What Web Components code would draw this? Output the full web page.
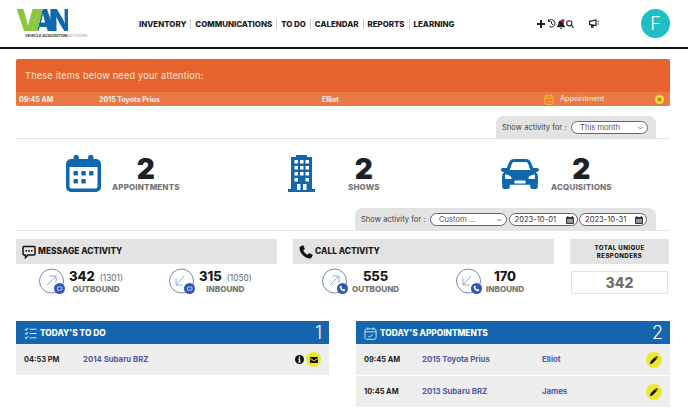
<!DOCTYPE html>
<html lang="en">
<head>
<meta charset="utf-8">
<title>Vehicle Acquisition Network</title>
<style>
  html, body { margin: 0; background: #fff; overflow: hidden; }
  body { font-family: Inter, "Liberation Sans", sans-serif; color: #222; }
  #page { width: 654px; padding: 0 18px 0 16px; }
  van-filter.first { margin-top: 10px; }
  van-filter.second { margin-top: 16px; }
  .stats { display: grid; grid-template-columns: 223px 213px auto; padding: 16px 0 0 49px; }
  .activity { display: grid; grid-template-columns: 261px 261px 99px; column-gap: 16px; margin-top: 8px; }
  .panels { display: grid; grid-template-columns: 313px 314px; column-gap: 27px; margin-top: 26px; }
</style>
</head>
<body>
<van-nav></van-nav>
<div id="page">
  <van-alert></van-alert>

  <van-filter class="first" style="--tab-width:160px">
    <van-pill style="--w:77px">This month</van-pill>
  </van-filter>

  <div class="stats">
    <van-stat value="2" label="APPOINTMENTS" style="--gap:10px"><van-icon name="calendar" style="--w:37px;--h:37px;color:#0f68ae"></van-icon></van-stat>
    <van-stat value="2" label="SHOWS" style="--gap:33px"><van-icon name="building" style="--w:27px;--h:37px;color:#0f68ae"></van-icon></van-stat>
    <van-stat value="2" label="ACQUISITIONS" style="--gap:12px"><van-icon name="car" style="--w:38px;--h:30px;color:#0f68ae"></van-icon></van-stat>
  </div>

  <van-filter class="second" style="--tab-width:301px">
    <van-pill style="--w:77px">Custom ...</van-pill>
    <van-pill date style="--w:69px">2023-10-01</van-pill>
    <van-pill date style="--w:68px">2023-10-31</van-pill>
  </van-filter>

  <div class="activity">
    <van-activity heading="MESSAGE ACTIVITY" icon="message" style="--pad:23px;--col:130px">
      <van-metric kind="out" badge="message" value="342" extra="(1301)" label="OUTBOUND"></van-metric>
      <van-metric kind="in" badge="message" value="315" extra="(1050)" label="INBOUND"></van-metric>
    </van-activity>
    <van-activity heading="CALL ACTIVITY" icon="phone" style="--pad:29px;--col:134px">
      <van-metric kind="out" badge="phone" value="555" label="OUTBOUND"></van-metric>
      <van-metric kind="in" badge="phone" value="170" label="INBOUND"></van-metric>
    </van-activity>
    <van-total value="342"></van-total>
  </div>

  <div class="panels">
    <van-panel heading="TODAY'S TO DO" icon="list" count="1">
      <van-row time="04:53 PM" car="2014 Subaru BRZ" style="--car:59px">
        <van-icon name="info" style="--w:9px;--h:9px;color:#111"></van-icon>
        <van-round name="mail" style="--size:15px"></van-round>
      </van-row>
    </van-panel>
    <van-panel heading="TODAY'S APPOINTMENTS" icon="calcheck" count="2">
      <van-row time="09:45 AM" car="2015 Toyota Prius" person="Elliot" style="--car:58px"><van-round name="pencil"></van-round></van-row>
      <van-row time="10:45 AM" car="2013 Subaru BRZ" person="James" style="--car:58px"><van-round name="pencil"></van-round></van-row>
    </van-panel>
  </div>
</div>

<script>
const ICONS = {
  calendar: ['0 0 37 37', '<path fill="currentColor" fill-rule="evenodd" d="M6 4h2.5V2.5a2.7 2.7 0 0 1 5.4 0V4h9.2V2.5a2.7 2.7 0 0 1 5.4 0V4H31a5 5 0 0 1 5 5v23a5 5 0 0 1-5 5H6a5 5 0 0 1-5-5V9a5 5 0 0 1 5-5zM4.500 12v19.500A2 2 0 0 0 6.500 33.500h24a2 2 0 0 0 2-2V12z"/><g fill="currentColor"><rect x="8.500" y="16" width="4.500" height="4.500" rx="1"/><rect x="16.300" y="16" width="4.500" height="4.500" rx="1"/><rect x="24" y="16" width="4.500" height="4.500" rx="1"/><rect x="8.500" y="24" width="4.500" height="4.500" rx="1"/><rect x="16.300" y="24" width="4.500" height="4.500" rx="1"/></g>'],
  building: ['0 0 27 37', '<path fill="currentColor" d="M3 2h5V0h11v2h5v32h3v3H0v-3h3z"/><g fill="#fff"><rect x="6.500" y="5" width="3.500" height="3.500"/><rect x="12" y="5" width="3.500" height="3.500"/><rect x="17.500" y="5" width="3.500" height="3.500"/><rect x="6.500" y="11" width="3.500" height="3.500"/><rect x="12" y="11" width="3.500" height="3.500"/><rect x="17.500" y="11" width="3.500" height="3.500"/><rect x="6.500" y="17" width="3.500" height="3.500"/><rect x="12" y="17" width="3.500" height="3.500"/><rect x="17.500" y="17" width="3.500" height="3.500"/><rect x="6.500" y="23" width="3.500" height="3.500"/><rect x="17.500" y="23" width="3.500" height="3.500"/><rect x="9" y="29" width="3.500" height="6"/><rect x="15" y="29" width="3.500" height="6"/></g>'],
  car: ['0 0 38 30', '<path fill="currentColor" fill-rule="evenodd" d="M8 3.500C9 1.200 10.500 0 13 0h12c2.500 0 4 1.200 5 3.500L32.300 9h3.700c1.200 0 2 .8 2 1.800S37 13 35.500 13h-.8c1.400 1.300 2.300 3 2.300 5v7h-.2v3a2 2 0 0 1-2 2h-3.600a2 2 0 0 1-2-2v-2.200H8.800V28a2 2 0 0 1-2 2H3.200a2 2 0 0 1-2-2v-3H1v-7c0-2 .9-3.700 2.300-5h-.8C1 13 0 12 0 10.800S.8 9 2 9h3.700zM11 4.500 8.600 11h20.800L27 4.500C26.600 3.500 26 3 25 3H13c-1 0-1.600.5-2 1.500zM4 16.500v2.200c0 .7.600 1.300 1.300 1.300h4.400c.8 0 1.300-.8.900-1.400-.7-1.200-3-2.800-5-3-1.300-.1-1.600.2-1.600.900zm30 0c0-.7-.3-1-1.600-.9-2 .2-4.300 1.800-5 3-.4.600.1 1.400.9 1.400h4.400c.7 0 1.300-.6 1.300-1.300zM13.500 21.500v3h11v-3z"/>'],
  message: ['0 0 14 14', '<path fill="none" stroke="currentColor" stroke-width="1.500" d="M2 1.500h10a1 1 0 0 1 1 1v6.500a1 1 0 0 1-1 1H6l-2.500 2.500V10H2a1 1 0 0 1-1-1V2.500a1 1 0 0 1 1-1z"/><g fill="currentColor"><rect x="3.500" y="5" width="1.600" height="1.600"/><rect x="6.200" y="5" width="1.600" height="1.600"/><rect x="8.900" y="5" width="1.600" height="1.600"/></g>'],
  phone: ['0 0 14 14', '<path fill="currentColor" d="M1 1.800 3.400.4c.4-.2.800-.1 1 .3l1.300 2.700c.2.300.1.700-.2.900L4.200 5.400c.8 1.800 2.500 3.500 4.400 4.400l1.100-1.300c.2-.3.600-.4.900-.2l2.700 1.300c.4.200.5.600.3 1l-1.400 2.400c-.2.300-.5.500-.9.500C5.700 13.500.5 8.300.5 2.700c0-.4.200-.7.500-.9z"/>'],
  list: ['0 0 14 14', '<g fill="none" stroke="currentColor" stroke-width="1.100"><path d="M1 2.200 2.300 3.400 4.300 1"/><path d="M1 6.700 2.300 7.900 4.300 5.500"/><path d="M1 11.200 2.300 12.400 4.300 10"/><path d="M6 2.500h7.500M6 7h7.500M6 11.500h7.500"/></g>'],
  calcheck: ['0 0 14 14', '<g fill="none" stroke="currentColor" stroke-width="1"><rect x="1" y="2" width="12" height="11.300" rx="2"/><path d="M1 5.200h12M4 .5v2.500M10 .5v2.500"/><path d="M4.500 9.500 6 11l3.500-3"/></g>'],
  calclip: ['0 0 12 13', '<g fill="none" stroke="currentColor" stroke-width="1.100"><rect x="1" y="2" width="10" height="10.300" rx="1.500"/><path d="M1 5h10M3.500.5V3M8.500.5V3"/><path d="M3.800 9h4.400l-1.200-1.300M8.200 9l-1.200 1.300"/></g>'],
  info: ['0 0 10 10', '<circle cx="5" cy="5" r="5" fill="currentColor"/><rect x="4.200" y="1.600" width="1.600" height="1.500" fill="#fff"/><path fill="#fff" d="M3.600 4h2.200v3.300h.7v1H3.500v-1h.8V5h-.7z"/>'],
  mail: ['0 0 8 6', '<path fill="currentColor" d="M.8 0h6.400c.4 0 .8.400.8.800v.2L4 3.200 0 1V.8C0 .4.400 0 .8 0zM0 2l4 2.200L8 2v3.200c0 .4-.4.800-.8.800H.8C.4 6 0 5.600 0 5.200z"/>'],
  pencil: ['0 0 9 9', '<path fill="currentColor" d="M0 9 .5 6.300 5.600 1.200 7.800 3.400 2.700 8.500zM6.200.6 6.700.1c.2-.1.400-.1.600 0L8.900 1.700c.1.200.1.400 0 .6l-.5.500z"/>'],
  plus: ['0 0 8 8', '<path fill="none" stroke="currentColor" stroke-width="2" d="M4 0v8M0 4h8"/>'],
  history: ['0 0 8 9', '<path fill="none" stroke="currentColor" stroke-width="1" d="M1.500 1.200A3.800 3.800 0 1 1 1.800 7.600M1 .5v2h2M4 2.500v2.300l1.500 1"/>'],
  bell: ['0 0 8 10', '<path fill="currentColor" d="M4 1.500c1.800 0 2.700 1.300 2.700 3 0 1.600.5 2.300 1.300 3v.8H0v-.8c.8-.7 1.300-1.400 1.300-3 0-1.700.9-3 2.700-3zM3 9h2a1 1 0 0 1-2 0z"/><circle cx="5.800" cy="1.700" r="1.700" fill="#e0142d"/>'],
  search: ['0 0 8 8', '<circle cx="3.300" cy="3.300" r="2.600" fill="none" stroke="currentColor" stroke-width="1.100"/><path stroke="currentColor" stroke-width="1.200" d="M5.200 5.200 7.700 7.700"/>'],
  megaphone: ['0 0 10 9', '<path fill="none" stroke="currentColor" stroke-width="1.200" d="M.6 2.300 7 .9v5.600L.6 5.400zM2.500 5.800v2.400h1.500V6.200"/><path stroke="currentColor" stroke-width="1" d="M8.500 2.600 10 2M8.500 4.800 10 5.200"/>'],
  close: ['0 0 10 10', '<circle cx="5" cy="5" r="5" fill="#f6e02c"/><path stroke="#a8651c" stroke-width="1.300" d="M3 3l4 4M7 3 3 7"/>'],
  date: ['0 0 9 9', '<rect y="1" width="9" height="8" rx="1" fill="#333"/><rect x="1.500" y="0" width="1.200" height="2" fill="#333"/><rect x="6.300" y="0" width="1.200" height="2" fill="#333"/><rect x="1.200" y="3.200" width="6.600" height="4.600" fill="#999"/>']
};

class VanIcon extends HTMLElement {
  constructor() {
    super();
    const [box, body] = ICONS[this.getAttribute('name')];
    this.attachShadow({ mode: 'open' }).innerHTML = `
      <style>
        :host { display: block; flex: none; width: var(--w, 10px); height: var(--h, 10px); }
        svg { display: block; width: 100%; height: 100%; }
      </style>
      <svg viewBox="${box}" aria-hidden="true">${body}</svg>`;
  }
}

const navTemplate = document.createElement('template');
navTemplate.innerHTML = `
<style>
  :host { display: flex; align-items: center; box-sizing: border-box; height: 49px; border-bottom: 2px solid #111; padding-left: 16px; }
  .logo { width: 123px; flex: none; align-self: flex-start; padding-top: 7px; }
  .van { display: block; width: 52px; height: 26px; font: 900 30px/27px Inter, sans-serif; letter-spacing: -6px; white-space: nowrap;
    background: linear-gradient(104deg, #8cc63f 0 47%, #0f68ae 47%); -webkit-background-clip: text; background-clip: text; color: transparent; }
  .sub { display: block; font: 700 3.800px/4px Inter, sans-serif; color: #333; white-space: nowrap; margin: 1px 0 0 9px; }
  .sub span { color: #999; font-weight: 400; }
  ul { display: flex; margin: 0; padding: 0; list-style: none; font: 800 7.900px/10px Inter, sans-serif; color: #1b1b1b; width: 398px; flex: none; }
  li + li { margin-left: 4px; padding-left: 4px; border-left: 1px solid #ccc; }
  .tools { display: flex; align-items: center; color: #222; }
  .avatar { width: 29px; height: 29px; border-radius: 50%; background: #20bfc4; color: #fff; margin-left: 42px;
    display: flex; align-items: center; justify-content: center; font: 300 18px/1 Inter, sans-serif; }
</style>
<div class="logo">
  <span class="van">VAN</span>
  <span class="sub">VEHICLE ACQUISITION <span>NETWORK</span></span>
</div>
<ul>
  <li>INVENTORY</li><li>COMMUNICATIONS</li><li>TO DO</li><li>CALENDAR</li><li>REPORTS</li><li>LEARNING</li>
</ul>
<div class="tools">
  <van-icon name="plus" style="--w:8px;--h:8px"></van-icon>
  <van-icon name="history" style="--w:9px;--h:9px;margin-left:2px"></van-icon>
  <van-icon name="bell" style="--w:8px;--h:10px;margin-left:1px"></van-icon>
  <van-icon name="search" style="--w:8px;--h:8px;margin-left:1px"></van-icon>
  <van-icon name="megaphone" style="--w:10px;--h:9px;margin-left:15px"></van-icon>
</div>
<div class="avatar">F</div>`;

class VanNav extends HTMLElement {
  constructor() {
    super();
    this.attachShadow({ mode: 'open' }).appendChild(navTemplate.content.cloneNode(true));
  }
}

const alertTemplate = document.createElement('template');
alertTemplate.innerHTML = `
<style>
  :host { display: block; margin-top: 10px; background: #e7632e; color: #fff; border-radius: 2px; overflow: hidden; }
  .head { height: 33px; display: flex; align-items: center; padding-left: 9px; font: 400 9.200px/1 Inter, sans-serif; letter-spacing: .2px; color: #fde6da; }
  .row { height: 14px; background: #ea7a45; display: grid; grid-template-columns: 80px 223px 222px 1fr 10px; align-items: center; padding: 0 5px 0 3px; font: 700 7px/1 Inter, sans-serif; color: #fdeee6; }
  .appt { display: flex; align-items: center; gap: 6px; font-weight: 400; font-size: 7.300px; }
</style>
<div class="head">These items below need your attention:</div>
<div class="row">
  <span>09:45 AM</span>
  <span>2015 Toyota Prius</span>
  <span>Elliot</span>
  <span class="appt"><van-icon name="calclip" style="--w:10px;--h:11px;color:#f6c22c"></van-icon>Appointment</span>
  <van-icon name="close" style="--w:9px;--h:9px"></van-icon>
</div>`;

class VanAlert extends HTMLElement {
  constructor() {
    super();
    this.attachShadow({ mode: 'open' }).appendChild(alertTemplate.content.cloneNode(true));
  }
}

const filterTemplate = document.createElement('template');
filterTemplate.innerHTML = `
<style>
  :host { display: flex; justify-content: flex-end; padding-right: 14px; border-bottom: 1px solid #e4e4e4; }
  .tab { box-sizing: border-box; width: var(--tab-width); height: 22px; background: #e3e3e3; border-radius: 7px 7px 0 0;
    display: flex; align-items: center; gap: 1.500px; padding: 1px 0 0 6px; font: 400 7.600px/1 Inter, sans-serif; color: #444; }
  .label { margin-right: 3px; white-space: nowrap; }
</style>
<div class="tab"><span class="label">Show activity for :</span><slot></slot></div>`;

class VanFilter extends HTMLElement {
  constructor() {
    super();
    this.attachShadow({ mode: 'open' }).appendChild(filterTemplate.content.cloneNode(true));
  }
}

const pillTemplate = document.createElement('template');
pillTemplate.innerHTML = `
<style>
  :host { display: flex; align-items: center; justify-content: space-between; box-sizing: border-box; width: var(--w); height: 13px;
    border: 1px solid #666; border-radius: 7px; background: #fff; padding: 0 4px 0 8px; font: 400 7.600px/1 Inter, sans-serif; color: #555; white-space: nowrap; }
  :host([date]) { padding: 0 3px 0 5px; color: #333; }
  svg { display: block; }
</style>
<slot></slot><span class="end"></span>`;

class VanPill extends HTMLElement {
  constructor() {
    super();
    this.attachShadow({ mode: 'open' }).appendChild(pillTemplate.content.cloneNode(true));
    this.shadowRoot.querySelector('.end').innerHTML = this.hasAttribute('date')
      ? '<van-icon name="date" style="--w:8px;--h:8px"></van-icon>'
      : '<svg width="5" height="4" viewBox="0 0 5 4"><path d="M.5 1 2.500 3 4.500 1" fill="none" stroke="#555" stroke-width=".8"/></svg>';
  }
}

class VanStat extends HTMLElement {
  constructor() {
    super();
    this.attachShadow({ mode: 'open' }).innerHTML = `
      <style>
        :host { display: flex; align-items: center; gap: var(--gap); height: 37px; }
        .text { display: flex; flex-direction: column; align-items: center; }
        b { font: 900 28px/25px Inter, sans-serif; color: #1e2227; margin-top: 2px; }
        span { font: 800 8px/10px Inter, sans-serif; color: #757575; white-space: nowrap; letter-spacing: .15px; }
      </style>
      <slot></slot>
      <div class="text"><b>${this.getAttribute('value')}</b><span>${this.getAttribute('label')}</span></div>`;
  }
}

class VanActivity extends HTMLElement {
  constructor() {
    super();
    this.attachShadow({ mode: 'open' }).innerHTML = `
      <style>
        :host { display: block; }
        .head { height: 25px; background: #e3e3e3; display: flex; align-items: center; gap: 2px; padding-left: 6px;
          font: 800 8.400px/1 Inter, sans-serif; color: #1a1a1a; }
        .body { display: grid; grid-template-columns: var(--col) auto; justify-content: start; padding: 4px 0 0 var(--pad); }
      </style>
      <div class="head"><van-icon name="${this.getAttribute('icon')}" style="--w:14px;--h:14px;color:#111"></van-icon>${this.getAttribute('heading')}</div>
      <div class="body"><slot></slot></div>`;
  }
}

class VanMetric extends HTMLElement {
  constructor() {
    super();
    const arrow = this.getAttribute('kind') === 'in' ? 'M15 8 7 17M7 10.500V17h6.500' : 'M8 17 17 8M10.500 8H17v6.500';
    const extra = this.getAttribute('extra');
    const badge = this.getAttribute('badge') === 'phone'
      ? '<path fill="#fff" transform="translate(17.500 17.500) scale(.42)" d="M1 1.800 3.400.4c.4-.2.800-.1 1 .3l1.300 2.700c.2.300.1.700-.2.900L4.200 5.400c.8 1.800 2.500 3.500 4.400 4.400l1.100-1.300c.2-.3.600-.4.900-.2l2.700 1.300c.4.200.5.600.3 1l-1.400 2.400c-.2.300-.5.500-.9.500C5.700 13.500.5 8.300.5 2.700c0-.4.200-.7.500-.9z"/>'
      : '<path fill="none" stroke="#cfe0ff" stroke-width=".8" d="M18.500 19h4.500v3h-2.500l-1 1v-1h-1z"/>';
    this.attachShadow({ mode: 'open' }).innerHTML = `
      <style>
        :host { display: flex; align-items: center; gap: 4px; height: 27px; }
        svg { flex: none; display: block; }
        .text { display: flex; flex-direction: column; align-items: center; }
        .num { display: flex; align-items: baseline; gap: 5px; white-space: nowrap; }
        b { font: 800 13px/15px Inter, sans-serif; color: #1a1a1a; }
        i { font: 400 8.300px/1 Inter, sans-serif; color: #666; }
        span { font: 800 8.100px/10px Inter, sans-serif; color: #757575; }
      </style>
      <svg width="26" height="27" viewBox="0 0 26 27">
        <circle cx="12.500" cy="13" r="12" fill="#fff" stroke="#5a62ad" stroke-width=".8"/>
        <path d="${arrow}" fill="none" stroke="#7f9fc7" stroke-width=".9"/>
        <circle cx="20.500" cy="20.500" r="5.500" fill="#2f57b5"/>
        ${badge}
      </svg>
      <div class="text">
        <div class="num"><b>${this.getAttribute('value')}</b>${extra ? `<i>${extra}</i>` : ''}</div>
        <span>${this.getAttribute('label')}</span>
      </div>`;
  }
}

class VanTotal extends HTMLElement {
  constructor() {
    super();
    this.attachShadow({ mode: 'open' }).innerHTML = `
      <style>
        :host { display: block; }
        .head { height: 25px; background: #e3e3e3; display: flex; align-items: center; justify-content: center; text-align: center;
          font: 800 6.100px/7.500px Inter, sans-serif; letter-spacing: .4px; color: #1a1a1a; }
        .val { box-sizing: border-box; height: 23px; margin: 7px 1px 0; border: 1px solid #e4e4e4; display: flex; align-items: center; justify-content: center;
          font: 800 14px/1 Inter, sans-serif; color: #6f6f6f; }
      </style>
      <div class="head"><span>TOTAL UNIQUE<br>RESPONDERS</span></div>
      <div class="val">${this.getAttribute('value')}</div>`;
  }
}

class VanPanel extends HTMLElement {
  constructor() {
    super();
    this.attachShadow({ mode: 'open' }).innerHTML = `
      <style>
        :host { display: flex; flex-direction: column; }
        .head { box-sizing: border-box; height: 23px; background: #1565af; color: #fff; display: flex; align-items: center; gap: 3px; padding: 1px 7px 0 8px;
          font: 800 8.300px/1 Inter, sans-serif; }
        .head van-icon { color: #cfeaf7; }
        .count { margin-left: auto; font: 300 18px/1 Inter, sans-serif; }
        ::slotted(van-row:not(:first-child)) { margin-top: 1px; }
      </style>
      <div class="head"><van-icon name="${this.getAttribute('icon')}" style="--w:13px;--h:13px"></van-icon>${this.getAttribute('heading')}<span class="count">${this.getAttribute('count')}</span></div>
      <slot></slot>`;
  }
}

class VanRow extends HTMLElement {
  constructor() {
    super();
    const person = this.getAttribute('person');
    this.attachShadow({ mode: 'open' }).innerHTML = `
      <style>
        :host { display: flex; align-items: center; height: 31px; background: #eeeeee; padding: 0 8px; font: 700 7.800px/1 Inter, sans-serif; }
        .time { width: var(--car); flex: none; color: #222; font-size: 7.400px; }
        .car { width: 120px; flex: none; color: #4f58a6; }
        .person { color: #4f58a6; }
        .end { margin-left: auto; display: flex; align-items: center; gap: 2px; }
      </style>
      <span class="time">${this.getAttribute('time')}</span>
      <span class="car">${this.getAttribute('car')}</span>
      ${person ? `<span class="person">${person}</span>` : ''}
      <div class="end"><slot></slot></div>`;
  }
}

class VanRound extends HTMLElement {
  constructor() {
    super();
    this.attachShadow({ mode: 'open' }).innerHTML = `
      <style>
        :host { display: flex; align-items: center; justify-content: center; width: var(--size, 16px); height: var(--size, 16px); border-radius: 50%; background: #ebe82f; color: #111; }
      </style>
      <van-icon name="${this.getAttribute('name')}" style="--w:8px;--h:8px"></van-icon>`;
  }
}

customElements.define('van-icon', VanIcon);
customElements.define('van-nav', VanNav);
customElements.define('van-alert', VanAlert);
customElements.define('van-filter', VanFilter);
customElements.define('van-pill', VanPill);
customElements.define('van-stat', VanStat);
customElements.define('van-activity', VanActivity);
customElements.define('van-metric', VanMetric);
customElements.define('van-total', VanTotal);
customElements.define('van-panel', VanPanel);
customElements.define('van-row', VanRow);
customElements.define('van-round', VanRound);
</script>
</body>
</html>
